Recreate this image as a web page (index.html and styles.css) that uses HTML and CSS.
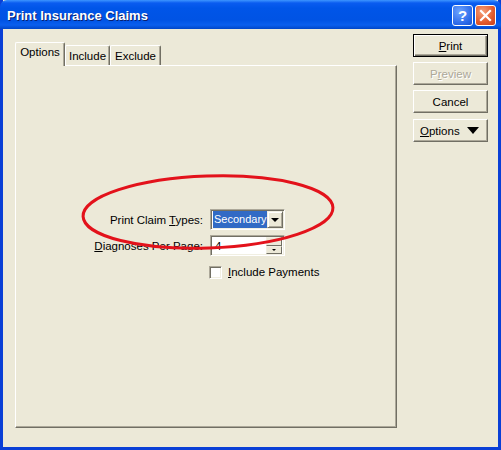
FILE: index.html
```html
<!DOCTYPE html>
<html lang="en">
<head>
    <meta charset="UTF-8">
    <title>Print Insurance Claims</title>
    <link rel="stylesheet" href="styles.css">
</head>
<body>
    <div class="window">
        <div class="titlebar">
            <span class="title">Print Insurance Claims</span>
            <div class="caption-btns">
                <span class="cap help">?</span>
                <span class="cap close">
                    <svg width="13" height="13" viewBox="0 0 13 13">
                        <path d="M2 2 L11 11 M11 2 L2 11" stroke="#fff" stroke-width="2.2" stroke-linecap="square"/>
                    </svg>
                </span>
            </div>
        </div>

        <div class="client">
            <div class="tabs-area">
                <div class="tab-strip">
                    <div class="tab active">Options</div>
                    <div class="tab tab-include">Include</div>
                    <div class="tab tab-exclude">Exclude</div>
                </div>
                <div class="panel">
                    <div class="form">
                        <label class="field-label">Print Claim <u>T</u>ypes:</label>
                        <div class="combo">
                            <span class="combo-value">Secondary</span>
                            <span class="drop-btn"><span class="tri"></span></span>
                        </div>

                        <label class="field-label"><u>D</u>iagnoses Per Page:</label>
                        <div class="combo spin">
                            <span class="spin-value">4</span>
                            <span class="spin-btns">
                                <span class="spin-up"></span>
                                <span class="spin-down"><span class="tri small"></span></span>
                            </span>
                        </div>

                        <span></span>
                        <label class="check">
                            <span class="check-box"></span>
                            <span><u>I</u>nclude Payments</span>
                        </label>
                    </div>
                </div>
            </div>

            <div class="buttons">
                <button class="btn default"><u>P</u>rint</button>
                <button class="btn disabled">P<u>r</u>eview</button>
                <button class="btn">Cancel</button>
                <button class="btn options"><span><u>O</u>ptions</span><span class="tri big"></span></button>
            </div>
        </div>

        <svg class="markup" width="501" height="450" viewBox="0 0 501 450">
            <ellipse cx="208" cy="212" rx="125" ry="36" fill="none" stroke="#e3121b" stroke-width="3" transform="rotate(-2 208 212)"/>
        </svg>
    </div>
</body>
</html>
```

FILE: styles.css
```css
* {
    margin: 0;
    padding: 0;
    box-sizing: border-box;
}

body {
    background: #ece9d8;
    font-family: 'Liberation Sans', Arial, sans-serif;
    font-size: 11.5px;
    color: #000;
}

.window {
    position: relative;
    width: 501px;
    height: 450px;
    background: #ece9d8;
    border: 3px solid #0a3fd6;
    border-top: none;
    display: flex;
    flex-direction: column;
}

.titlebar {
    height: 29px;
    margin: 0 -3px;
    border-radius: 7px 7px 0 0;
    background: linear-gradient(#3d95ff 0, #0a5cf0 3px, #0055e8 8px, #0053e4 20px, #0a5fee 25px, #0046c8 29px);
    display: flex;
    align-items: center;
    justify-content: space-between;
    padding: 1px 5px 0 7px;
}

.title {
    color: #fff;
    font-weight: bold;
    font-size: 13px;
    text-shadow: 1px 1px #0a1f6e;
}

.caption-btns {
    display: flex;
    gap: 2px;
}

.cap {
    width: 21px;
    height: 21px;
    border: 1px solid #fff;
    border-radius: 3px;
    display: flex;
    align-items: center;
    justify-content: center;
    color: #fff;
    font-weight: bold;
    font-size: 15px;
}

.help {
    background: radial-gradient(circle at 35% 30%, #6ea4ff, #2a68e8 70%, #1d52cc);
}

.close {
    background: radial-gradient(circle at 35% 30%, #f5a07a, #e25a2c 60%, #c8401c);
}

.client {
    flex: 1;
    display: flex;
    padding: 13px 0 19px 12px;
}

.tabs-area {
    width: 382px;
    display: flex;
    flex-direction: column;
}

.tab-strip {
    height: 23px;
    display: flex;
    align-items: flex-end;
    position: relative;
    z-index: 1;
}

.tab {
    height: 20px;
    padding-top: 4px;
    text-align: center;
    border: 1px solid #fff;
    border-right: 1px solid #716f64;
    border-bottom: none;
    border-radius: 2px 2px 0 0;
    box-shadow: inset -1px 0 #aca899;
    background: #ece9d8;
}

.tab.active {
    width: 50px;
    height: 24px;
    margin-bottom: -1px;
    padding-top: 3px;
}

.tab-include {
    width: 45px;
}

.tab-exclude {
    width: 51px;
}

.panel {
    flex: 1;
    border: 1px solid;
    border-color: #fff #716f64 #716f64 #fff;
    box-shadow: inset -1px -1px #aca899;
}

.form {
    display: grid;
    grid-template-columns: 187px 75px;
    grid-template-rows: 21px 21px 14px;
    column-gap: 7px;
    row-gap: 5px;
    margin-top: 143px;
    align-items: center;
}

.field-label {
    text-align: right;
    white-space: nowrap;
}

.combo {
    height: 21px;
    background: #fff;
    border: 1px solid;
    border-color: #aca899 #fff #fff #aca899;
    box-shadow: inset 1px 1px #716f64, inset -1px -1px #f1efe2;
    display: flex;
    align-items: center;
    padding: 2px;
    justify-content: space-between;
}

.combo-value {
    flex: none;
    background: #316ac5;
    color: #fff;
    padding: 1px 0 2px 1px;
    font-size: 11px;
    line-height: 14px;
    white-space: nowrap;
}

.drop-btn {
    width: 16px;
    height: 17px;
    flex: none;
    background: #ece9d8;
    border: 1px solid;
    border-color: #f1efe2 #716f64 #716f64 #f1efe2;
    box-shadow: inset 1px 1px #fff, inset -1px -1px #aca899;
    display: flex;
    align-items: center;
    justify-content: center;
}

.tri {
    width: 0;
    height: 0;
    border-left: 4px solid transparent;
    border-right: 4px solid transparent;
    border-top: 4px solid #000;
}

.tri.small {
    border-left-width: 2px;
    border-right-width: 2px;
    border-top-width: 2px;
}

.tri.big {
    border-left-width: 6px;
    border-right-width: 6px;
    border-top-width: 7px;
}

.spin-value {
    padding-left: 2px;
}

.spin-btns {
    width: 16px;
    height: 17px;
    display: flex;
    flex-direction: column;
}

.spin-up,
.spin-down {
    flex: 1;
    background: #ece9d8;
    border: 1px solid;
    border-color: #f1efe2 #716f64 #716f64 #f1efe2;
    display: flex;
    align-items: center;
    justify-content: center;
}

.check {
    display: flex;
    align-items: center;
    gap: 6px;
    margin-left: -1px;
    margin-top: 8px;
    white-space: nowrap;
}

.check-box {
    width: 13px;
    height: 13px;
    flex: none;
    background: #fff;
    border: 1px solid;
    border-color: #aca899 #fff #fff #aca899;
    box-shadow: inset 1px 1px #716f64, inset -1px -1px #f1efe2;
}

.buttons {
    margin-left: 16px;
    margin-top: -8px;
    display: flex;
    flex-direction: column;
    gap: 5px;
}

.btn {
    width: 75px;
    height: 23px;
    font: inherit;
    background: #ece9d8;
    border: 1px solid;
    border-color: #fff #716f64 #716f64 #fff;
    box-shadow: inset -1px -1px #aca899;
    display: flex;
    align-items: center;
    justify-content: center;
    color: #000;
}

.btn.default {
    border-color: #000;
    box-shadow: inset 1px 1px #fff, inset -1px -1px #716f64, inset -2px -2px #aca899;
}

.btn.disabled {
    color: #aca899;
    text-shadow: 1px 1px #fff;
}

.btn.options {
    justify-content: space-between;
    padding: 0 8px 0 6px;
    margin-top: 1px;
}

.markup {
    position: absolute;
    top: 0;
    left: -3px;
    pointer-events: none;
}
```
